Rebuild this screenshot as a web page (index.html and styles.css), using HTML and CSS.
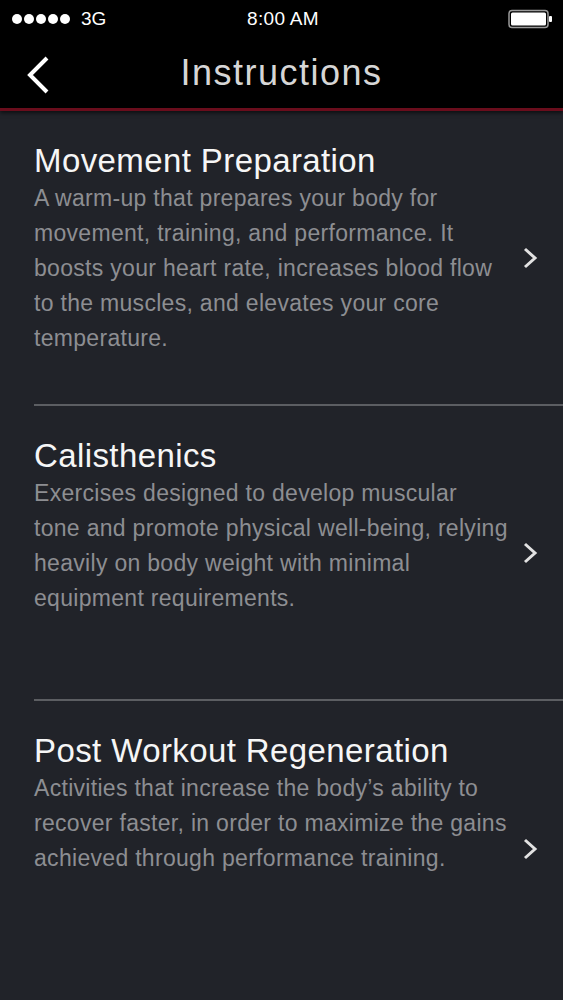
FILE: index.html
```html
<!DOCTYPE html>
<html lang="en">
<head>
    <meta charset="UTF-8">
    <meta name="viewport" content="width=device-width, initial-scale=1.0">
    <title>Instructions</title>
    <link rel="stylesheet" href="styles.css">
</head>
<body>
<div class="status-bar">
    <div class="signal">
        <span class="dot"></span><span class="dot"></span><span class="dot"></span><span class="dot"></span><span class="dot"></span>
        <span class="carrier">3G</span>
    </div>
    <div class="clock">8:00 AM</div>
    <div class="battery">
        <svg width="46" height="20" viewBox="0 0 46 20">
            <rect x="1" y="1.5" width="39" height="17" rx="3" fill="none" stroke="#9a9a9a" stroke-width="1.5"/>
            <rect x="3" y="3.5" width="35" height="13" rx="1.5" fill="#ffffff"/>
            <rect x="41" y="7" width="3" height="6" rx="1" fill="#ffffff"/>
        </svg>
    </div>
</div>

<div class="nav-bar">
    <a class="back" href="#">
        <svg width="26" height="40" viewBox="0 0 26 40">
            <polyline points="22,3 5,20 22,37" fill="none" stroke="#ffffff" stroke-width="4"/>
        </svg>
    </a>
    <h1>Instructions</h1>
</div>

<div class="list">
    <div class="row">
        <div class="row-text">
            <h2>Movement Preparation</h2>
            <p>A warm-up that prepares your body for movement, training, and performance. It boosts your heart rate, increases blood flow to the muscles, and elevates your core temperature.</p>
        </div>
        <svg class="chev" width="16" height="22" viewBox="0 0 16 22">
            <polyline points="3,2 13,11 3,20" fill="none" stroke="#e2e2e2" stroke-width="3"/>
        </svg>
    </div>

    <div class="row">
        <div class="row-text">
            <h2>Calisthenics</h2>
            <p>Exercises designed to develop muscular tone&nbsp;and promote physical well-being, relying heavily on body weight with minimal equipment requirements.</p>
        </div>
        <svg class="chev" width="16" height="22" viewBox="0 0 16 22">
            <polyline points="3,2 13,11 3,20" fill="none" stroke="#e2e2e2" stroke-width="3"/>
        </svg>
    </div>

    <div class="row last">
        <div class="row-text">
            <h2>Post Workout Regeneration</h2>
            <p>Activities that increase the body’s ability to recover faster, in order to maximize the gains achieved through performance training.</p>
        </div>
        <svg class="chev" width="16" height="22" viewBox="0 0 16 22">
            <polyline points="3,2 13,11 3,20" fill="none" stroke="#e2e2e2" stroke-width="3"/>
        </svg>
    </div>
</div>
</body>
</html>
```

FILE: styles.css
```css
body {
    margin: 0;
    background-color: #212329;
    font-family: "Liberation Sans", Arial, sans-serif;
    color: #ffffff;
}
.status-bar {
    height: 37px;
    background-color: #000000;
    display: flex;
    align-items: center;
    justify-content: space-between;
    padding: 0 9px 0 12px;
}
.signal {
    display: flex;
    align-items: center;
    gap: 2px;
    width: 140px;
}
.dot {
    width: 10px;
    height: 10px;
    border-radius: 50%;
    background-color: #ffffff;
}
.carrier {
    margin-left: 9px;
    font-size: 19px;
}
.clock {
    font-size: 19px;
    letter-spacing: 0.3px;
}
.battery {
    width: 140px;
    display: flex;
    justify-content: flex-end;
}
.nav-bar {
    height: 71px;
    background-color: #000000;
    border-bottom: 3px solid #6a0d1c;
    box-shadow: 0 2px 4px rgba(0, 0, 0, 0.6);
    display: flex;
    align-items: center;
    justify-content: center;
    position: relative;
}
.back {
    position: absolute;
    left: 25px;
    top: 18px;
}
h1 {
    margin: 0;
    font-size: 36px;
    font-weight: normal;
    letter-spacing: 1.5px;
    color: #d6d6d6;
}
.list {
    padding-left: 34px;
}
.row {
    height: 295px;
    box-sizing: border-box;
    border-bottom: 2px solid #5c5e62;
    display: flex;
    align-items: center;
}
.row.last {
    border-bottom: none;
}
.row-text {
    align-self: flex-start;
    width: 482px;
    padding-top: 31px;
}
h2 {
    margin: 0;
    font-size: 33px;
    line-height: 38px;
    font-weight: normal;
    letter-spacing: 0.4px;
    color: #f6f6f6;
}
p {
    margin: 1px 0 0 0;
    font-size: 23px;
    line-height: 35px;
    letter-spacing: 0.3px;
    color: #8d8e92;
}
.chev {
    margin-left: 6px;
}
```
